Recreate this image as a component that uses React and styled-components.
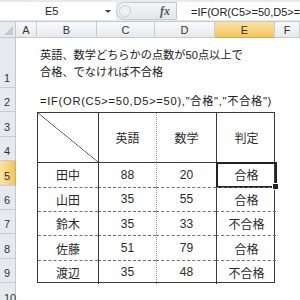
import React from "react";
import styled, { createGlobalStyle, css } from "styled-components";

const GlobalStyle = createGlobalStyle`
  html, body {
    margin: 0;
    padding: 0;
    background: #fff;
    overflow: hidden;
  }
  body {
    font-family: "Liberation Sans", "Noto Sans CJK JP", sans-serif;
    color: #333;
  }
`;

const Page = styled.div`
  width: 300px;
  height: 300px;
  overflow: hidden;
  background: #fff;
`;

const FormulaBar = styled.div`
  display: flex;
  height: 22px;
  box-sizing: border-box;
  padding: 2px 0 1px;
  background: #e6e9ed;
  border-bottom: 1px solid #c3c7ce;
`;

const NameBox = styled.div`
  width: 116px;
  display: flex;
  align-items: center;
  background: #fff;
  font-size: 11px;
  color: #222;
`;

const NameText = styled.span`
  flex: 1;
  padding-left: 45px;
`;

const Arrow = styled.span`
  width: 0;
  height: 0;
  margin-right: 5px;
  border-left: 3px solid transparent;
  border-right: 3px solid transparent;
  border-top: 3px solid #444;
`;

const FxArea = styled.div`
  width: 61px;
  display: flex;
  align-items: center;
  justify-content: space-between;
  box-sizing: border-box;
  padding: 0 6px 0 2px;
  border: 1px solid #c6cad0;
  border-radius: 9px 0 0 9px;
  background: linear-gradient(#f4f5f7, #e3e6ea);
`;

const Grip = styled.span`
  width: 12px;
  height: 12px;
  border-radius: 50%;
  border: 1px solid #c9ccd1;
  background: #eef0f2;
  box-sizing: border-box;
`;

const Fx = styled.span`
  font-family: "Liberation Serif", serif;
  font-style: italic;
  font-weight: bold;
  font-size: 12px;
  color: #555;
`;

const FormulaInput = styled.div`
  flex: 1;
  display: flex;
  align-items: center;
  background: #fff;
  padding-left: 14px;
  font-size: 11px;
  color: #222;
  white-space: nowrap;
  overflow: hidden;
`;

const Sheet = styled.div`
  display: grid;
  grid-template-columns: 16px 21px 60px 58px 60px 60px 1fr;
  grid-template-rows: 16px 50px repeat(9, 24.4px);
`;

const Corner = styled.div`
  grid-column: 1;
  grid-row: 1;
  background: #e8ebef;
  border-right: 1px solid #c3c7ce;
  border-bottom: 1px solid #c3c7ce;
  position: relative;
  &::after {
    content: "";
    position: absolute;
    right: 2px;
    bottom: 2px;
    border-left: 9px solid transparent;
    border-bottom: 9px solid #c5c9cf;
  }
`;

const ColHead = styled.div`
  grid-row: 1;
  display: flex;
  align-items: center;
  justify-content: center;
  font-size: 11px;
  color: #333;
  box-sizing: border-box;
  border-right: 1px solid #c8ccd3;
  border-bottom: 1px solid #c3c7ce;
  background: linear-gradient(#f8f9fa, #e7e9ed);
  ${(p) =>
    p.$active &&
    css`
      background: linear-gradient(#fae3a6, #f2c55f);
      border-bottom-color: #e2a93c;
    `}
`;

const RowHead = styled.div`
  grid-column: 1;
  display: flex;
  align-items: flex-end;
  padding: 0 0 3px 4px;
  font-size: 11px;
  color: #333;
  box-sizing: border-box;
  border-bottom: 1px solid #c8ccd3;
  border-right: 1px solid #c3c7ce;
  background: #e6e9ee;
  ${(p) =>
    p.$active &&
    css`
      background: linear-gradient(90deg, #fae3a6, #f2c55f);
      border-right-color: #e2a93c;
    `}
`;

const Note = styled.div`
  grid-column: 3 / 8;
  grid-row: 2;
  padding: 9px 0 0 3px;
  font-size: 11.2px;
  line-height: 17px;
  color: #222;
  white-space: nowrap;
`;

const FormulaCell = styled.div`
  grid-column: 3 / 8;
  grid-row: 3;
  display: flex;
  align-items: center;
  padding: 0 0 1px 3px;
  font-size: 11.2px;
  letter-spacing: 0.7px;
  color: #222;
  white-space: nowrap;
`;

const Table = styled.div`
  grid-column: 3 / 7;
  grid-row: 4 / 11;
  display: grid;
  grid-template-columns: 60px 58px 60px 60px;
  grid-template-rows: 48.8px repeat(5, 24.4px);
  border: 1px solid #3a3a3a;
  box-sizing: border-box;
`;

const Cell = styled.div`
  display: flex;
  align-items: center;
  justify-content: center;
  font-size: 12px;
  color: #2a2a2a;
  position: relative;
  box-sizing: border-box;
  ${(p) => p.$left === "solid" && css`border-left: 1px solid #3a3a3a;`}
  ${(p) => p.$left === "dotted" && css`border-left: 1px dotted #9a9a9a;`}
  ${(p) => p.$top === "solid" && css`border-top: 1px solid #3a3a3a;`}
  ${(p) => p.$top === "dashed" && css`border-top: 1px dashed #707070;`}
  ${(p) =>
    p.$diagonal &&
    css`
      background: linear-gradient(
        to top right,
        transparent calc(50% - 0.6px),
        #3a3a3a 50%,
        transparent calc(50% + 0.6px)
      );
    `}
  ${(p) =>
    p.$selected &&
    css`
      &::after {
        content: "";
        position: absolute;
        left: -1px;
        top: -1px;
        right: -1px;
        bottom: -1px;
        border: 2px solid #222;
      }
      &::before {
        content: "";
        position: absolute;
        right: -3px;
        bottom: -3px;
        width: 5px;
        height: 5px;
        background: #222;
        border: 1px solid #fff;
        z-index: 1;
      }
    `}
`;

const columns = ["A", "B", "C", "D", "E", "F"];

const rows = [
  ["田中", "88", "20", "合格"],
  ["山田", "35", "55", "合格"],
  ["鈴木", "35", "33", "不合格"],
  ["佐藤", "51", "79", "合格"],
  ["渡辺", "35", "48", "不合格"],
];

const formula = '=IF(OR(C5>=50,D5>=50),"合格","不合格")';

export default function App() {
  return (
    <Page>
      <GlobalStyle />
      <FormulaBar>
        <NameBox>
          <NameText>E5</NameText>
          <Arrow />
        </NameBox>
        <FxArea>
          <Grip />
          <Fx>fx</Fx>
        </FxArea>
        <FormulaInput>{formula}</FormulaInput>
      </FormulaBar>
      <Sheet>
        <Corner />
        {columns.map((c, i) => (
          <ColHead key={c} $active={c === "E"} style={{ gridColumn: i + 2 }}>
            {c}
          </ColHead>
        ))}
        {Array.from({ length: 10 }, (_, i) => (
          <RowHead key={i} $active={i + 1 === 5} style={{ gridRow: i + 2 }}>
            {i + 1}
          </RowHead>
        ))}
        <Note>
          英語、数学どちらかの点数が50点以上で
          <br />
          合格、でなければ不合格
        </Note>
        <FormulaCell>{formula}</FormulaCell>
        <Table>
          <Cell $diagonal />
          <Cell $left="solid">英語</Cell>
          <Cell $left="dotted">数学</Cell>
          <Cell $left="solid">判定</Cell>
          {rows.map((r, i) => {
            const top = i === 0 ? "solid" : "dashed";
            return (
              <React.Fragment key={r[0]}>
                <Cell $top={top}>{r[0]}</Cell>
                <Cell $top={top} $left="solid">
                  {r[1]}
                </Cell>
                <Cell $top={top} $left="dotted">
                  {r[2]}
                </Cell>
                <Cell $top={top} $left="solid" $selected={i === 0}>
                  {r[3]}
                </Cell>
              </React.Fragment>
            );
          })}
        </Table>
      </Sheet>
    </Page>
  );
}
